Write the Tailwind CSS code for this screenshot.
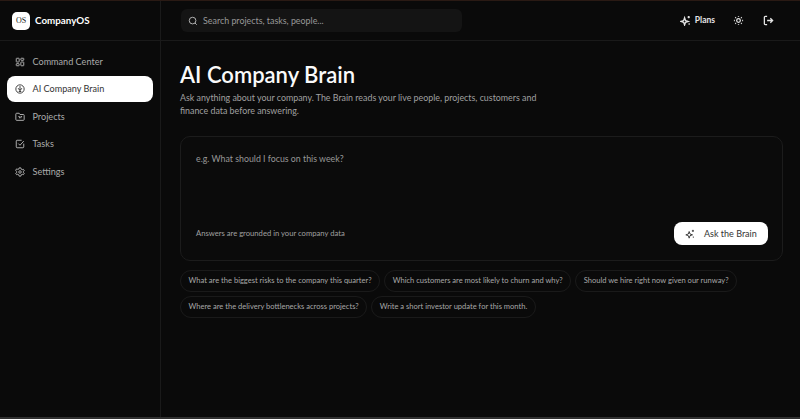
<!DOCTYPE html>
<html><head><meta charset="utf-8"><script src="https://cdn.jsdelivr.net/npm/@tailwindcss/browser@4"></script></head>
<body class="bg-[#0a0a0a]">
<div class="w-[800px] h-[419px] flex flex-col overflow-hidden bg-[#0a0a0a] font-['Lato',sans-serif] text-white">
  <div class="h-px bg-[#2a1a14] shrink-0"></div>
  <div class="flex-1 flex min-h-0">
    <aside class="w-[161px] shrink-0 border-r border-[#1a1a1a] flex flex-col">
      <div class="h-[40px] border-b border-[#1a1a1a] flex items-center pl-3 gap-[5px] shrink-0">
        <div class="w-[18px] h-[18px] rounded-[5px] bg-white text-[#222] flex items-center justify-center text-[8px] leading-none font-['Liberation_Serif',serif]">OS</div>
        <span class="text-[9.8px] font-bold leading-none">CompanyOS</span>
      </div>
      <nav class="flex flex-col gap-[1.6px] px-[7px] pt-[7.5px]">
        <a class="h-[26px] flex items-center gap-[7.5px] pl-[8px] text-[9.1px] text-[#ababab]">
          <svg class="w-[10px] h-[10px]" viewBox="0 0 24 24" fill="none" stroke="currentColor" stroke-width="2.4"><rect x="3" y="3" width="7" height="9" rx="1"/><rect x="14" y="3" width="7" height="5" rx="1"/><rect x="14" y="12" width="7" height="9" rx="1"/><rect x="3" y="16" width="7" height="5" rx="1"/></svg>
          Command Center</a>
        <a class="h-[26px] flex items-center gap-[7.5px] pl-[8px] text-[9.1px] text-[#333] bg-white rounded-[8px]">
          <svg class="w-[10px] h-[10px]" viewBox="0 0 24 24" fill="none" stroke="currentColor" stroke-width="2.2"><circle cx="12" cy="12" r="10"/><path d="M12 5v14M8 10c0 3 2 4 4 4s4-1 4-4M9 18h6"/></svg>
          AI Company Brain</a>
        <a class="h-[26px] flex items-center gap-[7.5px] pl-[8px] text-[9.1px] text-[#ababab]">
          <svg class="w-[10px] h-[10px]" viewBox="0 0 24 24" fill="none" stroke="currentColor" stroke-width="2.4"><path d="M20 20a2 2 0 0 0 2-2V8a2 2 0 0 0-2-2h-8l-2-3H4a2 2 0 0 0-2 2v13a2 2 0 0 0 2 2Z"/><path d="M8 11h3v4M14 15v-4h3"/></svg>
          Projects</a>
        <a class="h-[26px] flex items-center gap-[7.5px] pl-[8px] text-[9.1px] text-[#ababab]">
          <svg class="w-[10px] h-[10px]" viewBox="0 0 24 24" fill="none" stroke="currentColor" stroke-width="2.4"><path d="M21 11v8a2 2 0 0 1-2 2H5a2 2 0 0 1-2-2V5a2 2 0 0 1 2-2h11"/><path d="m8 11 4 4 9-10"/></svg>
          Tasks</a>
        <a class="h-[26px] flex items-center gap-[7.5px] pl-[8px] text-[9.1px] text-[#ababab]">
          <svg class="w-[10px] h-[10px]" viewBox="0 0 24 24" fill="none" stroke="currentColor" stroke-width="2.4"><circle cx="12" cy="12" r="3"/><path d="M10 2h4l.7 3 2.6 1.5 3-.9 2 3.4-2.3 2v2l2.3 2-2 3.4-3-.9-2.6 1.500-.7 3h-4l-.7-3-2.600-1.500-3 .9-2-3.400 2.300-2v-2L1.700 8l2-3.400 3 .9L9.300 5Z"/></svg>
          Settings</a>
      </nav>
    </aside>
    <div class="flex-1 min-w-0 flex flex-col">
      <header class="h-[40px] border-b border-[#1a1a1a] flex items-center pl-[20px] pr-[26px] shrink-0">
        <div class="w-[281px] h-[23px] rounded-[6px] bg-[#141414] flex items-center pl-[7px] gap-[5px] text-[8.9px] text-[#989898]">
          <svg class="w-[10px] h-[10px] text-[#bdbdbd]" viewBox="0 0 24 24" fill="none" stroke="currentColor" stroke-width="2.200"><circle cx="11" cy="11" r="8"/><path d="m21 21-4.300-4.300"/></svg>
          Search projects, tasks, people...
        </div>
        <div class="ml-auto flex items-center text-[#e5e5e5]">
          <svg class="w-[11px] h-[11px] mr-[4px]" viewBox="0 0 24 24" fill="none" stroke="currentColor" stroke-width="2.800"><path d="M10 6l2 6 6 2-6 2-2 6-2-6-6-2 6-2Z"/><path d="M19 2v5M16.500 4.500h5M20 18v3"/></svg>
          <span class="text-[8.500px] font-bold">Plans</span>
          <svg class="w-[11px] h-[11px] ml-[18px]" viewBox="0 0 24 24" fill="none" stroke="currentColor" stroke-width="2.800"><circle cx="12" cy="12" r="4"/><path d="M12 2v2M12 20v2M4.900 4.900l1.500 1.500M17.600 17.600l1.500 1.500M2 12h2M20 12h2M4.900 19.100l1.500-1.500M17.600 6.400l1.500-1.500"/></svg>
          <svg class="w-[11px] h-[11px] ml-[19px]" viewBox="0 0 24 24" fill="none" stroke="currentColor" stroke-width="2.800"><path d="M9 21H5a2 2 0 0 1-2-2V5a2 2 0 0 1 2-2h4M16 17l5-5-5-5M21 12H9"/></svg>
        </div>
      </header>
      <main class="flex-1 pl-[19px] pr-[17px] pt-[20px]">
        <h1 class="text-[22px] leading-[28px] font-semibold text-[#fafafa]">AI Company Brain</h1>
        <p class="mt-[2px] text-[8.870px] leading-[13px] text-[#a0a0a0] w-[380px]">Ask anything about your company. The Brain reads your live people, projects, customers and finance data before answering.</p>
        <section class="mt-[19px] h-[125px] border border-[#1c1c1c] rounded-[10px] bg-[#0b0b0b] flex flex-col pl-[15px] pr-[14px]">
          <div class="pt-[15px] text-[8.800px] leading-[13px] text-[#989898]">e.g. What should I focus on this week?</div>
          <div class="mt-auto mb-[15px] flex items-center justify-between">
            <span class="text-[7.650px] text-[#a0a0a0]">Answers are grounded in your company data</span>
            <button class="w-[94px] h-[23px] rounded-[8px] bg-white text-[#333] flex items-center pl-[11px] gap-[9px] text-[9px]">
              <svg class="w-[10px] h-[10px]" viewBox="0 0 24 24" fill="none" stroke="currentColor" stroke-width="2.200"><path d="M10 6l2 6 6 2-6 2-2 6-2-6-6-2 6-2Z"/><path d="M19 2v5M16.500 4.500h5M20 18v3"/></svg>
              Ask the Brain
            </button>
          </div>
        </section>
        <div class="mt-[9px] flex flex-wrap gap-x-[4px] gap-y-[4px] text-[7.550px] text-[#a8a8a8]">
          <span class="h-[22px] px-[7.500px] flex items-center rounded-full border border-[#1a1a1a]">What are the biggest risks to the company this quarter?</span>
          <span class="h-[22px] px-[7.500px] flex items-center rounded-full border border-[#1a1a1a]">Which customers are most likely to churn and why?</span>
          <span class="h-[22px] px-[7.500px] flex items-center rounded-full border border-[#1a1a1a]">Should we hire right now given our runway?</span>
          <span class="h-[22px] px-[7.500px] flex items-center rounded-full border border-[#1a1a1a]">Where are the delivery bottlenecks across projects?</span>
          <span class="h-[22px] px-[7.500px] flex items-center rounded-full border border-[#1a1a1a]">Write a short investor update for this month.</span>
        </div>
      </main>
    </div>
  </div>
  <div class="h-[2px] bg-[#303030] shrink-0"></div>
</div>
</body></html>
